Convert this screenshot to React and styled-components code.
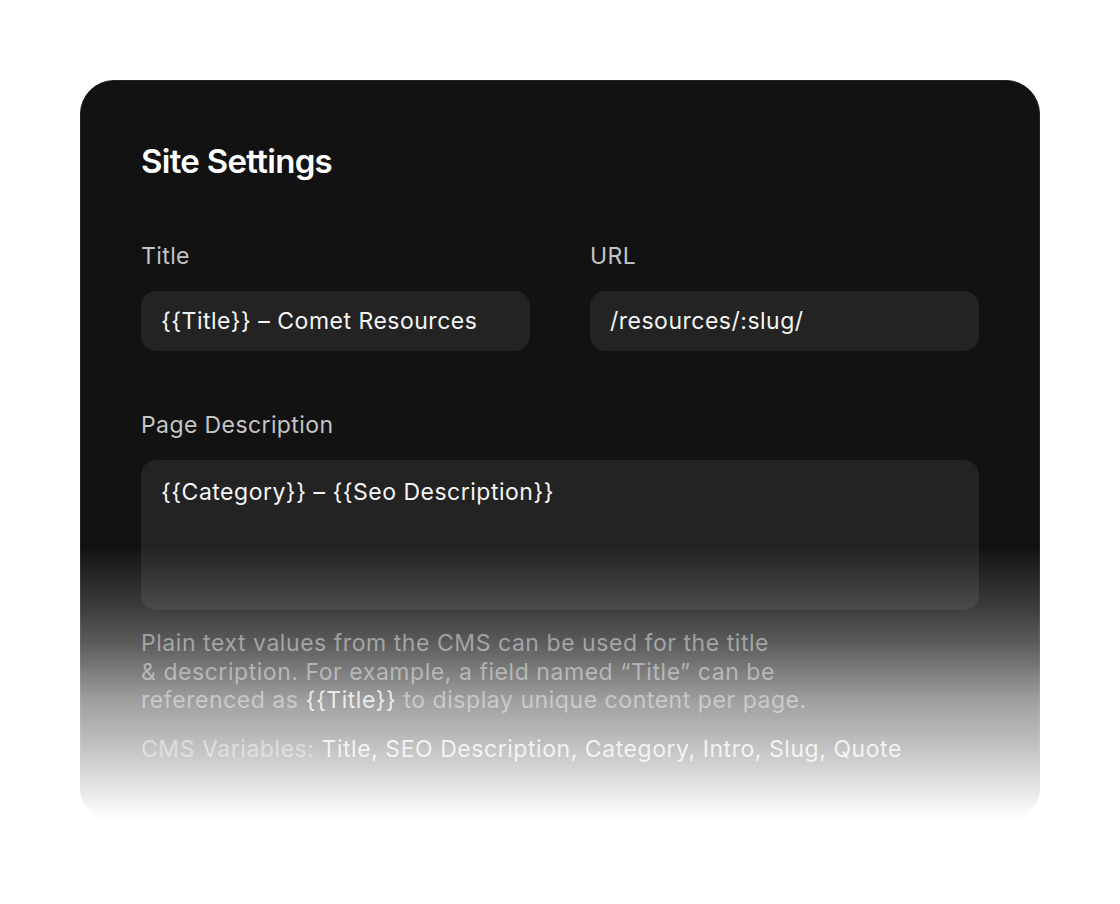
import React from "react";
import styled, { createGlobalStyle } from "styled-components";

const GlobalStyle = createGlobalStyle`
  html, body {
    margin: 0;
    padding: 0;
    background: #ffffff;
  }
  body {
    font-family: Inter, "Noto Sans", "Liberation Sans", sans-serif;
    -webkit-font-smoothing: antialiased;
  }
`;

const Page = styled.div`
  width: 1120px;
  height: 904px;
  padding: 80px;
  box-sizing: border-box;
`;

const Frame = styled.div`
  position: relative;
  width: 960px;
`;

const Card = styled.section`
  box-sizing: border-box;
  padding: 59px 60px 58px;
  background: #121212;
  border: 1px solid #242424;
  border-radius: 34px;
  color: #f2f2f2;
`;

const Fade = styled.div`
  position: absolute;
  left: -1px;
  right: -1px;
  bottom: -1px;
  height: 276px;
  border-radius: 0 0 35px 35px;
  pointer-events: none;
  background: linear-gradient(
    to bottom,
    rgba(255, 255, 255, 0) 0%,
    rgba(255, 255, 255, 0.18) 22%,
    rgba(255, 255, 255, 0.3) 34%,
    rgba(255, 255, 255, 0.6) 56%,
    rgba(255, 255, 255, 0.75) 73%,
    rgba(255, 255, 255, 0.97) 95%,
    rgba(255, 255, 255, 1) 100%
  );
`;

const Heading = styled.h1`
  margin: 0;
  font-size: 33px;
  line-height: 42px;
  font-weight: 600;
  letter-spacing: -0.7px;
  color: #ffffff;
`;

const Row = styled.div`
  display: grid;
  grid-template-columns: 1fr 1fr;
  gap: 60px;
  margin-top: 60px;
`;

const Field = styled.div`
  display: flex;
  flex-direction: column;
  gap: 21px;
  margin-top: ${(p) => p.$top || 0}px;
`;

const Label = styled.label`
  font-size: 23px;
  line-height: 28px;
  font-weight: 400;
  letter-spacing: 0.4px;
  color: #c4c4c4;
`;

const Input = styled.div`
  height: ${(p) => p.$height || 60}px;
  box-sizing: border-box;
  padding: ${(p) => (p.$multiline ? "18px 20px" : "0 20px")};
  display: flex;
  align-items: ${(p) => (p.$multiline ? "flex-start" : "center")};
  background: #232323;
  border-radius: 15px;
  font-size: 23px;
  line-height: 28px;
  letter-spacing: 0.5px;
  color: #f4f4f4;
`;

const Help = styled.p`
  margin: 19px 0 0;
  max-width: 700px;
  font-size: 23px;
  line-height: 28.5px;
  letter-spacing: 0.55px;
  color: #7a7a7a;
`;

const Vars = styled.p`
  margin: 20px 0 0;
  font-size: 23px;
  line-height: 28px;
  letter-spacing: 0.55px;
  color: #7a7a7a;
  white-space: nowrap;
`;

const Hi = styled.span`
  color: #cfcfcf;
`;

export default function App() {
  return (
    <>
      <GlobalStyle />
      <Page>
        <Frame>
          <Card>
            <Heading>Site Settings</Heading>
            <Row>
              <Field>
                <Label>Title</Label>
                <Input>{"{{Title}} – Comet Resources"}</Input>
              </Field>
              <Field>
                <Label>URL</Label>
                <Input>/resources/:slug/</Input>
              </Field>
            </Row>
            <Field $top={60}>
              <Label>Page Description</Label>
              <Input $multiline $height={150}>
                {"{{Category}} – {{Seo Description}}"}
              </Input>
            </Field>
            <Help>
              Plain text values from the CMS can be used for the title
              <br />& description. For example, a field named “Title” can be
              <br />
              referenced as <Hi>{"{{Title}}"}</Hi> to display unique content per
              page.
            </Help>
            <Vars>
              CMS Variables:{" "}
              <Hi>Title, SEO Description, Category, Intro, Slug, Quote</Hi>
            </Vars>
          </Card>
          <Fade />
        </Frame>
      </Page>
    </>
  );
}
